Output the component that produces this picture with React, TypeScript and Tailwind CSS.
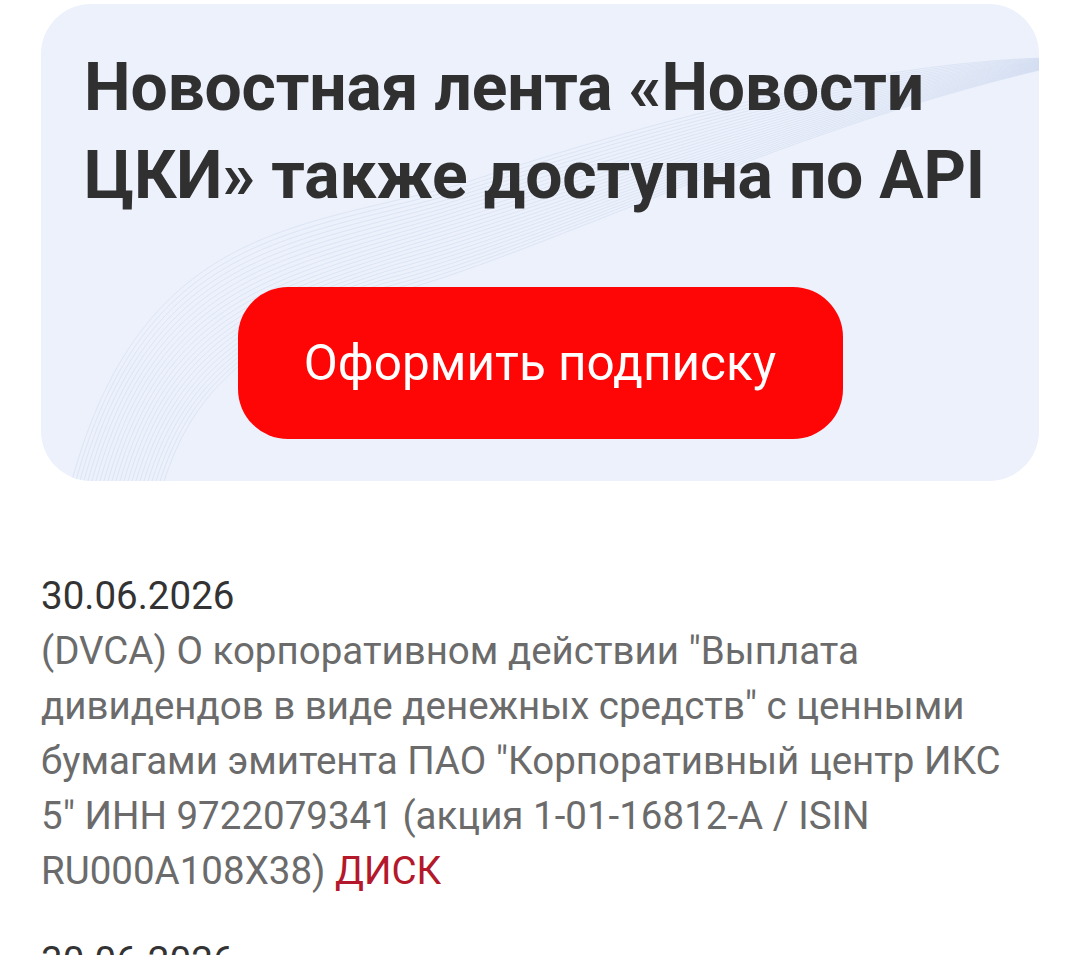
import React from 'react';

const waves = Array.from({ length: 24 }, (_, i) => i);

// thin curves fanning out from the top-right corner of the banner
const BannerWaves: React.FC = () => (
  <svg
    className="absolute inset-0 h-full w-full pointer-events-none"
    viewBox="0 0 997 477"
    preserveAspectRatio="none"
    fill="none"
  >
    {waves.map((i) => (
      <path
        key={i}
        d={`M 1000 ${54 + i * 0.5} C ${820 - i * 4} ${60 + i * 3}, ${600 - i * 5} ${120 + i * 6}, ${420 - i * 4} ${180 + i * 5} C ${260 - i * 3} ${225 + i * 5}, ${100 + i * 2} ${220 + i * 8}, ${30 + i * 4} ${480}`}
        stroke="#bfcdea"
        strokeWidth={0.7}
        opacity={0.5}
      />
    ))}
  </svg>
);

const App: React.FC = () => {
  return (
    <div className="min-h-[955px] bg-white font-['Roboto','Liberation_Sans',sans-serif] overflow-hidden">
      <div className="px-[41px] pt-[4px]">
        {/* API banner */}
        <div className="relative overflow-hidden rounded-[50px] bg-[#ecf1fb] px-[43px] pt-[40px] pb-[42px]">
          <BannerWaves />
          <h2 className="relative text-[66px] leading-[88px] font-bold text-[#303030] tracking-[-0.2px]">
            Новостная лента «Новости ЦКИ» также доступна по API
          </h2>
          <div className="relative mt-[67px] flex justify-center">
            <button className="h-[152px] w-[605px] rounded-[50px] bg-[#fe0606] text-[49.5px] text-white">
              Оформить подписку
            </button>
          </div>
        </div>

        {/* News feed */}
        <div className="mt-[87px] pr-[20px] flex flex-col gap-[35px] text-[38.5px] leading-[55px]">
          <div>
            <div className="text-[#333333]">30.06.2026</div>
            <p className="text-[#6b6b6b]">
              (DVCA) О корпоративном действии "Выплата дивидендов в виде денежных средств" с ценными
              бумагами эмитента ПАО "Корпоративный центр ИКС 5" ИНН 9722079341 (акция 1-01-16812-А /
              ISIN RU000A108X38) <span className="text-[#b3182b]">ДИСК</span>
            </p>
          </div>
          <div>
            <div className="text-[#333333]">30.06.2026</div>
            <p className="text-[#6b6b6b]">
              (DVCA) О корпоративном действии "Выплата дивидендов в виде денежных средств"
            </p>
          </div>
        </div>
      </div>
    </div>
  );
};

export default App;
